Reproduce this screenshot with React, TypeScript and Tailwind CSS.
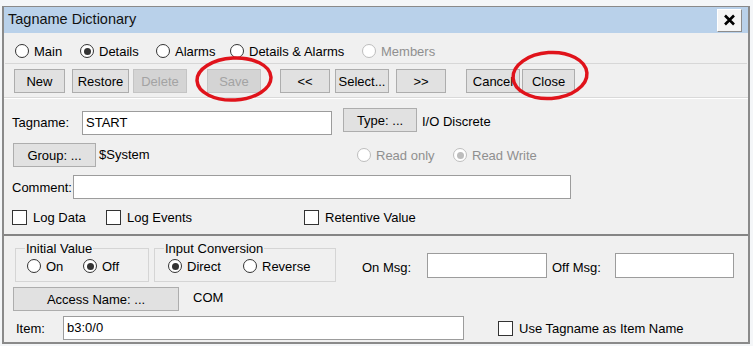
import React from 'react';
import clsx from 'clsx';

type Props = { label: string; className?: string; checked?: boolean; disabled?: boolean };

function Radio({ label, className, checked, disabled }: Props) {
  return (
    <span className={clsx('flex items-center gap-[5px] shrink-0', className)}>
      <span
        className={clsx(
          'w-[14px] h-[14px] rounded-full border bg-white flex items-center justify-center shrink-0',
          disabled ? 'border-[#bdbdbd]' : 'border-[#333333]'
        )}
      >
        {checked && (
          <span className={clsx('w-[7px] h-[7px] rounded-full', disabled ? 'bg-[#bdbdbd]' : 'bg-[#333333]')} />
        )}
      </span>
      <span className={clsx('leading-none', disabled && 'text-[#8f8f8f]')}>{label}</span>
    </span>
  );
}

function Check({ label, className }: Props) {
  return (
    <span className={clsx('flex items-center gap-[6px] shrink-0', className)}>
      <span className="w-[15px] h-[15px] border border-[#333333] bg-white shrink-0" />
      <span className="leading-none">{label}</span>
    </span>
  );
}

function Btn({ label, className, disabled }: Props) {
  return (
    <button
      className={clsx(
        'h-[24px] border flex items-center justify-center shrink-0 leading-none',
        disabled ? 'bg-[#d4d4d4] border-[#c4c4c4] text-[#a3a3a3]' : 'bg-[#e1e1e1] border-[#adadad] text-black',
        className
      )}
    >
      {label}
    </button>
  );
}

function Field({ value, className }: { value?: string; className?: string }) {
  return (
    <div className={clsx('h-[24px] bg-white border border-[#9c9c9c] flex items-center pl-[3px] shrink-0', className)}>
      {value}
    </div>
  );
}

export default function App() {
  return (
    <div
      className="relative w-[753px] h-[346px] overflow-hidden bg-[#f4f6f8] pt-[6px] pl-[2px] text-[13px] text-black"
      style={{ fontFamily: '"Liberation Sans", Arial, sans-serif' }}
    >
      <div className="w-[748px] h-[338px] border-t border-x-2 border-b-2 border-[#8a8a8a] bg-[#f0f0f0] flex flex-col overflow-hidden">
        {/* title bar */}
        <div className="h-[26px] bg-[#b9d1ea] flex items-center justify-between pl-[4px] pr-[6px] shrink-0">
          <span className="text-[14.5px] text-[#111]">Tagname Dictionary</span>
          <div className="w-[25px] h-[23px] bg-[#f4f4f4] border border-t-white border-l-white border-r-[#8c8c8c] border-b-[#8c8c8c] flex items-center justify-center">
            <svg width="13" height="12" viewBox="0 0 13 12">
              <path d="M2 1.5 L11 10.5 M11 1.5 L2 10.5" stroke="#000" strokeWidth="2.6" />
            </svg>
          </div>
        </div>

        {/* view radios */}
        <div className="mt-[8px] h-[20px] flex items-center pl-[11px] shrink-0">
          <Radio label="Main" className="w-[65px]" />
          <Radio label="Details" checked className="w-[76px]" />
          <Radio label="Alarms" className="w-[74px]" />
          <Radio label="Details & Alarms" className="w-[132px]" />
          <Radio label="Members" disabled />
        </div>

        <div className="mt-[2px] h-px bg-[#d7d7d7] mx-[1px] shrink-0" />

        {/* toolbar */}
        <div className="mt-[5px] h-[24px] flex items-center pl-[10px] shrink-0">
          <Btn label="New" className="w-[51px]" />
          <Btn label="Restore" className="w-[57px] ml-[7px]" />
          <Btn label="Delete" disabled className="w-[54px] ml-[4px]" />
          <Btn label="Save" disabled className="w-[54px] ml-[20px]" />
          <Btn label="<<" className="w-[50px] ml-[19px]" />
          <Btn label="Select..." className="w-[54px] ml-[5px]" />
          <Btn label=">>" className="w-[50px] ml-[7px]" />
          <Btn label="Cancel" className="w-[54px] ml-[20px]" />
          <Btn label="Close" className="w-[53px] ml-[2px]" />
        </div>

        <div className="mt-[4px] h-px bg-[#d9d9d9] shrink-0" />
        <div className="h-px bg-white shrink-0" />

        {/* tagname */}
        <div className="mt-[9px] h-[27px] flex items-start pl-[8px] shrink-0">
          <span className="w-[70px] mt-[8px] leading-none">Tagname:</span>
          <Field value="START" className="w-[250px] mt-[3px]" />
          <Btn label="Type: ..." className="w-[74px] ml-[11px]" />
          <span className="ml-[5px] mt-[7px] leading-none">I/O Discrete</span>
        </div>

        {/* group */}
        <div className="mt-[8px] h-[24px] flex items-center pl-[9px] shrink-0">
          <Btn label="Group: ..." className="w-[83px]" />
          <span className="ml-[3px] w-[258px] leading-none mb-[2px]">$System</span>
          <Radio label="Read only" disabled className="w-[96px]" />
          <Radio label="Read Write" disabled checked />
        </div>

        {/* comment */}
        <div className="mt-[8px] h-[24px] flex items-center pl-[8px] shrink-0">
          <span className="w-[61px] leading-none">Comment:</span>
          <Field className="w-[498px]" />
        </div>

        {/* checkboxes */}
        <div className="mt-[9px] h-[18px] flex items-center pl-[8px] shrink-0">
          <Check label="Log Data" className="w-[94px]" />
          <Check label="Log Events" className="w-[198px]" />
          <Check label="Retentive Value" />
        </div>

        <div className="mt-[8px] h-[2px] bg-[#858585] shrink-0" />

        {/* lower panel */}
        <div className="mt-[5px] h-[41px] flex items-start shrink-0">
          <fieldset className="ml-[11px] w-[134px] h-[41px] border border-[#d5d5d5] shrink-0">
            <legend className="ml-[9px] px-px leading-[15px]">Initial Value</legend>
            <div className="flex items-center pl-[11px] mt-[3px]">
              <Radio label="On" className="w-[56px]" />
              <Radio label="Off" checked />
            </div>
          </fieldset>
          <fieldset className="ml-[5px] w-[182px] h-[41px] border border-[#d5d5d5] shrink-0">
            <legend className="ml-[9px] px-px leading-[15px]">Input Conversion</legend>
            <div className="flex items-center pl-[13px] mt-[3px]">
              <Radio label="Direct" checked className="w-[75px]" />
              <Radio label="Reverse" />
            </div>
          </fieldset>
          <div className="ml-[26px] mt-[12px] h-[25px] flex items-center">
            <span className="w-[65px] leading-none mt-[3px]">On Msg:</span>
            <Field className="w-[120px] h-[25px]" />
            <span className="ml-[5px] w-[63px] leading-none mt-[3px]">Off Msg:</span>
            <Field className="w-[119px] h-[25px]" />
          </div>
        </div>

        <div className="mt-[5px] h-[24px] flex items-start pl-[9px] shrink-0">
          <Btn label="Access Name: ..." className="w-[166px]" />
          <span className="ml-[14px] mt-[4px] leading-none">COM</span>
        </div>

        <div className="mt-[5px] h-[24px] flex items-center pl-[12px] shrink-0">
          <span className="w-[47px] leading-none">Item:</span>
          <Field value="b3:0/0" className="w-[401px]" />
          <Check label="Use Tagname as Item Name" className="ml-[34px]" />
        </div>
      </div>

      {/* red annotation circles */}
      <svg className="absolute inset-0 pointer-events-none" width="753" height="346">
        <ellipse cx="234" cy="79" rx="37" ry="21" fill="none" stroke="#e0131b" strokeWidth="3.5" transform="rotate(-3 234 79)" />
        <ellipse cx="550" cy="75.5" rx="37" ry="23" fill="none" stroke="#e0131b" strokeWidth="3.5" transform="rotate(-4 550 75.5)" />
      </svg>
    </div>
  );
}
